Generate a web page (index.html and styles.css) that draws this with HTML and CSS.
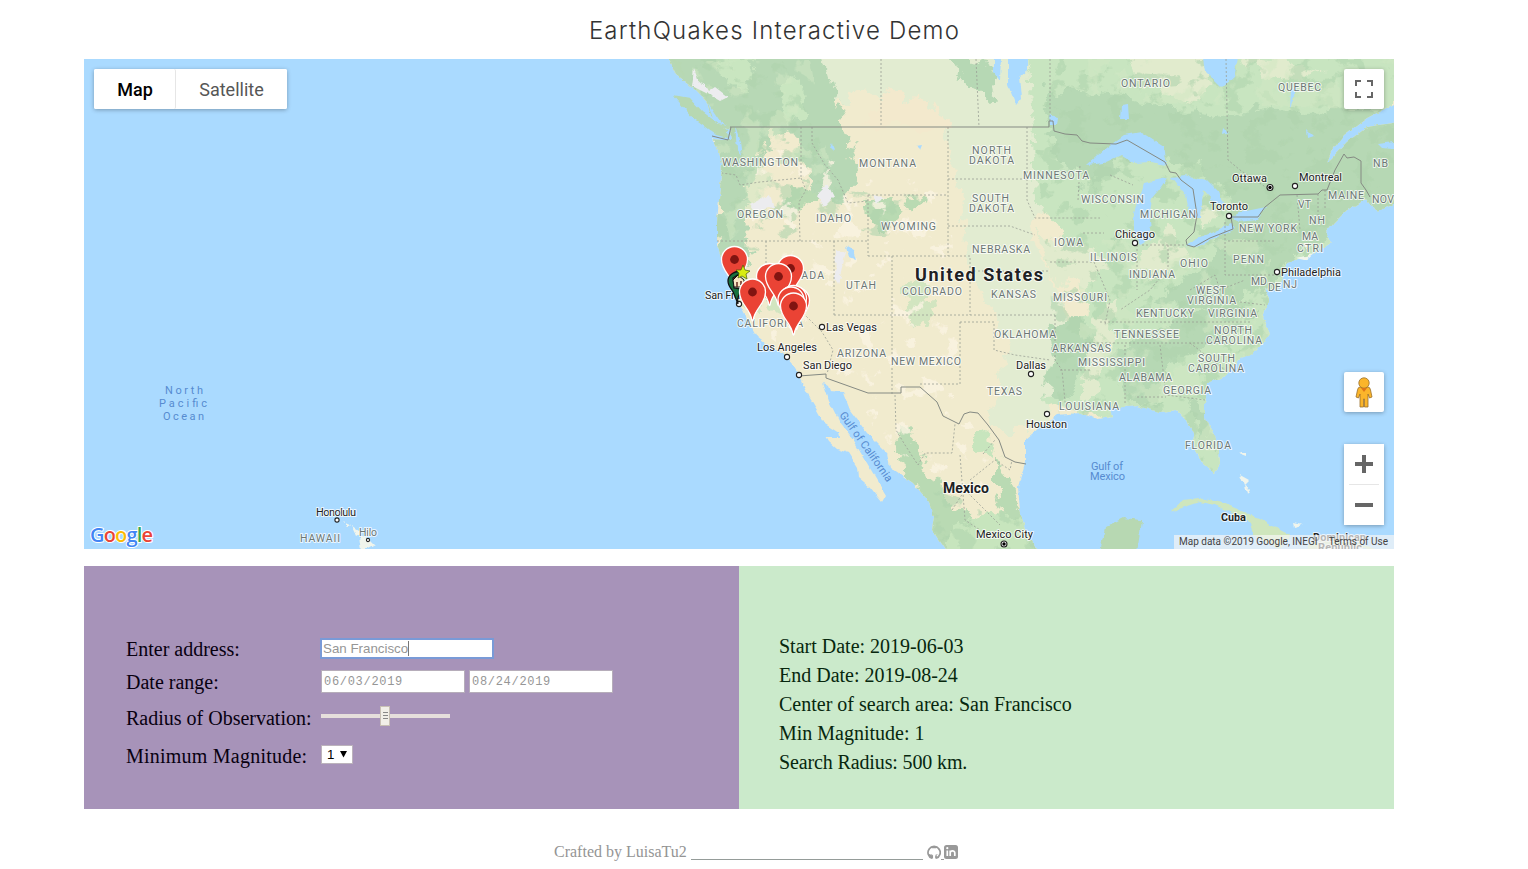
FILE: index.html
```html
<!DOCTYPE html>
<html lang="en">
<head>
<meta charset="utf-8">
<title>EarthQuakes Interactive Demo</title>
<link rel="stylesheet" href="styles.css">
</head>
<body>
<h1 class="title">EarthQuakes Interactive Demo</h1>
<main class="content">
<section class="map">
<svg class="map-canvas" viewBox="84 59 1310 490" width="1310" height="490">
<defs>
<filter id="rough" x="0" y="0" width="100%" height="100%"><feTurbulence type="fractalNoise" baseFrequency=".11" numOctaves="3" seed="4"/><feDisplacementMap in="SourceGraphic" scale="5" xChannelSelector="R" yChannelSelector="G"/></filter>
<filter id="ragged" x="-10%" y="-10%" width="120%" height="120%" color-interpolation-filters="sRGB"><feTurbulence type="fractalNoise" baseFrequency=".06" numOctaves="4" seed="9"/><feDisplacementMap in="SourceGraphic" scale="24" xChannelSelector="R" yChannelSelector="G"/></filter>
<filter id="patchDark" x="0" y="0" width="100%" height="100%" color-interpolation-filters="sRGB"><feTurbulence type="fractalNoise" baseFrequency=".045 .055" numOctaves="4" seed="12"/><feColorMatrix values="0 0 0 0 .69  0 0 0 0 .83  0 0 0 0 .68  14 0 0 0 -7.8"/><feComposite operator="in" in2="SourceGraphic"/></filter>
<filter id="patchLight" x="0" y="0" width="100%" height="100%" color-interpolation-filters="sRGB"><feTurbulence type="fractalNoise" baseFrequency=".05" numOctaves="4" seed="31"/><feColorMatrix values="0 0 0 0 .985  0 0 0 0 .955  0 0 0 0 .89  0 16 0 0 -10.1"/><feComposite operator="in" in2="SourceGraphic"/></filter>
<filter id="patchPale" x="0" y="0" width="100%" height="100%" color-interpolation-filters="sRGB"><feTurbulence type="fractalNoise" baseFrequency=".035" numOctaves="4" seed="44"/><feColorMatrix values="0 0 0 0 .82  0 0 0 0 .91  0 0 0 0 .77  0 0 14 0 -7.9"/><feComposite operator="in" in2="SourceGraphic"/></filter>
<clipPath id="land"><path d="M667 55L677 75 690 85 707 102 711 116 722 127 730 130 731 140 722 140 713 139 719 152 722 165 720 188 717 222 717 245 723 262 730 280 736 294 740 304 748 320 757 337 770 347 783 353 792 364 799 377 807 393 817 410 825 424 839 433 840 437 826 437 829 442 837 449 848 453 857 467 858 477 870 487 882 502 886 495 877 480 867 463 853 440 840 423 830 403 823 383 828 386 830 391 843 392 850 410 867 433 887 453 890 467 913 483 930 503 934 517 932 530 947 552 1038 552 1025 530 1020 510 1018 487 1025 463 1025 440 1040 427 1057 415 1080 413 1097 419 1113 417 1110 408 1137 406 1160 412 1177 410 1187 420 1193 433 1195 450 1203 463 1215 473 1220 463 1218 443 1205 417 1205 403 1208 383 1227 375 1240 360 1257 350 1270 333 1263 318 1268 300 1264 288 1277 290 1282 280 1287 263 1311 255 1331 243 1326 232 1334 222 1344 212 1367 198 1377 212 1398 202 1398 122 1367 127 1347 142 1327 163 1331 152 1344 135 1367 118 1398 102V55Z"/></clipPath>
</defs>
<rect x="84" y="59" width="1310" height="490" fill="#aadaff"/>
<g filter="url(#rough)">
<g clip-path="url(#land)">
<rect x="650" y="50" width="750" height="510" fill="#f1ebce"/>
<g filter="url(#ragged)">
<path fill="#e2ecd1" d="M820 40H1080V150L1030 230 1070 330 1045 430H990L1010 340 970 270 960 190 945 125H900L870 90 825 110Z"/>
<path fill="#f3e9cd" d="M865 127L885 90 925 100 955 127Z"/>
<path fill="#b7d8b5" d="M650 40H820L835 90 850 150 858 180 835 205 815 195 800 150 790 132 772 135 760 165 748 190 745 240 752 262 738 275 715 250 712 125 650 80Z"/>
<path fill="#c9e6c0" d="M700 40H755L745 95 725 80ZM780 90L800 75 805 120 790 127Z"/>
<path fill="#b9dab2" d="M863 200L890 198 905 210 880 235 868 225ZM905 195L925 203 910 210ZM808 185L830 195 805 207 770 220 785 200Z"/>
<path fill="#c8e5c0" d="M1030 50H1400V330L1210 480 1180 430 1060 410 1045 400 1060 330 1090 310 1080 260 1035 200Z"/>
<path fill="#b6d8b4" d="M1045 88L1120 95 1180 112 1225 118 1260 105 1300 112 1400 110V220L1300 250 1270 290 1190 310 1150 300 1210 265 1230 200 1200 165 1120 160 1090 190 1050 150Z"/>
<path fill="#b6d8b4" d="M1045 325L1080 318 1100 335 1085 365 1065 400 1045 395 1055 360ZM1115 350L1210 305 1265 310 1220 340 1165 370 1160 405 1125 402ZM1190 400L1207 410 1217 455 1195 430ZM950 55L985 60 995 100 965 85Z"/>
<path fill="#e1ebcd" d="M1130 50H1205L1210 90 1190 108 1165 90 1135 80ZM1240 55L1290 62 1320 75 1270 82ZM1100 310L1118 300 1110 350 1092 405 1078 402ZM1130 265L1170 225 1190 255 1160 280ZM1185 205L1225 208 1205 230ZM1040 235L1080 245 1110 265 1085 285 1050 280Z"/>
<path fill="#b9dab3" d="M900 425L915 435 925 465 950 505 985 520 1035 530 1040 560H930L925 500 895 455ZM995 455L1010 480 1025 530 1010 530 995 490Z"/>
<path fill="#c7e5bd" d="M950 530L990 510 1020 520 1040 560H945ZM975 425L995 440 990 460 970 445Z"/>
<path fill="#d2e5c0" d="M725 270L745 275 760 310 745 310ZM768 285L785 300 780 315 765 300ZM905 290L925 265 935 310 910 330Z"/>
</g>
<path filter="url(#patchDark)" opacity=".6" d="M690 55H780L850 205 760 250 705 245ZM1035 130L1060 59H1394V320L1210 480 1060 415ZM930 490L1035 520V550H935ZM820 190L920 195 900 240 840 230Z"/>
<path filter="url(#patchPale)" opacity=".55" d="M1060 59H1394V110L1060 100ZM690 60H810L830 170 730 240ZM1080 240H1270V450H1080Z"/>
<path filter="url(#patchLight)" opacity=".8" d="M760 140L950 190 960 400 1010 500 930 490 840 390 760 330 750 240Z"/>
</g>
<g fill="#ececef"><path d="M694 69L699 82 705 84 709 91 715 87 728 97 720 101 708 94 692 86ZM817 195L828 184 834 196 823 207ZM836 250L846 252 838 285 835 278ZM750 205L770 195 774 207 755 211ZM872 195L883 197 878 204Z"/></g>
<g fill="#aadaff"><path d="M735 126L740 142 742 156 737 149ZM846 246L853 250 856 260 849 257ZM994 57H1001L1000 80 994 72ZM1008 57H1028V70L1020 77 1022 98 1016 105 1008 85ZM1204 57H1238L1234 77 1222 88 1206 72ZM1121 105L1128 104 1129 119 1120 119ZM1291 90L1298 86 1290 108ZM708 103L720 121 727 125 714 122ZM916 146L922 145 920 150ZM832 143L834 152 830 148ZM1223 128L1228 133 1222 135ZM1307 129L1314 136 1308 138ZM1050 115L1058 117 1057 125 1051 125Z"/>
<path d="M1087 165L1107 147 1124 135 1141 132 1164 147 1167 165 1151 162 1134 163 1121 155 1104 163ZM1144 183L1167 178 1161 187 1152 198 1149 222 1151 240 1141 245 1134 232 1134 212ZM1171 177L1184 175 1207 180 1219 192 1224 207 1211 199 1203 190 1201 218 1191 218 1186 196ZM1186 245L1194 240 1211 233 1232 223 1234 229 1217 238 1194 248ZM1231 217L1241 212 1266 207 1257 219 1237 221ZM1378 144L1394 142V149L1382 148Z"/></g>
<path fill="#b7d8b2" d="M673 95L690 98 703 112 727 130 728 138 716 135 693 118ZM671 58L681 62 684 77ZM1100 552L1105 527 1123 518 1142 520 1137 552Z"/>
<path fill="#cfe6bd" d="M1170 512L1183 500 1200 498 1223 503 1247 513 1270 525 1290 535 1280 549 1253 535 1250 522 1215 505 1200 502ZM1308 545L1330 538 1380 549H1308Z"/>
<path fill="#f1f5ec" d="M343 521L352 525 348 526ZM352 526L361 532 356 535ZM360 535L368 538 375 545 362 552ZM1238 453H1246V456ZM1240 475L1249 480 1244 485ZM1245 484L1250 490 1247 495ZM1290 505L1293 508ZM1293 523L1302 525 1294 527ZM1303 244H1311L1306 248ZM1297 258L1313 254 1305 260Z"/>
</g>
<g class="state-lines">
<path d="M801 127V178L760 182 740 185 736 175 722 173M801 178L806 190 799 202 800 241M717 241H868M812 127V143L825 165 838 180 848 203 868 201M868 195H948M948 127V256M868 195V256M868 256H970V315M834 241V315M892 256V395M766 241V276L822 332 833 350 827 374M834 315H1055M960 322V384H919M960 322H994V350L1015 355 1050 360M948 179H1027M948 226H1010L1035 235M1027 127V200L1035 218H1100M970 271H1050M1055 315V360L1062 370 1066 412M1050 262H1094L1110 300 1105 325M1100 322H1250M1085 343H1215M1137 245V290M1168 245V268L1150 290 1120 310M1142 245H1185M1225 222V275H1278M1228 241H1275M1125 345V404M1160 345L1166 395 1205 400M1137 397H1166M1060 370H1090M1190 290L1215 275 1220 290 1245 280M1050 59V121M881 59V127M976 59L979 127M1226 59L1228 160 1240 170 1270 190M1078 200L1080 165M1110 175L1133 185M1083 233H1104M1297 195L1300 230M1318 194V222M1325 190V210M1240 302L1265 305M1190 343L1225 370M895 395L896 430 905 445 918 465 925 453H952L955 424M970 480L995 460 1010 470 1012 460M952 510L965 490 985 510 1000 525M983 454L995 440M960 455L965 520 980 530"/>
</g>
<g class="country-lines"><path d="M730 127H1049V121H1053L1054 131 1065 134 1077 135 1082 141 1090 143 1116 144 1127 140 1165 162 1170 172 1176 173 1181 180 1193 189 1197 215 1194 232 1186 240 1187 245 1194 247 1210 238 1233 229 1231 217H1258L1265 207 1280 195 1318 194 1322 190H1327L1335 170 1344 154 1347 158 1354 157 1361 161V183L1366 190 1370 197M712 136L728 140 731 127M799 376L826 374V378L868 393H901V387H920L937 402 943 416 959 424 964 414 970 412 978 413 988 425 999 440 1005 457 1015 462 1026 464"/></g>
<g class="state-label">
<text x="722" y="166" textLength="76">WASHINGTON</text><text x="859" y="167" textLength="57">MONTANA</text><text x="972" y="154" textLength="39">NORTH</text><text x="969" y="164" textLength="45">DAKOTA</text><text x="1023" y="179" textLength="66">MINNESOTA</text><text x="737" y="218" textLength="46">OREGON</text><text x="816" y="222" textLength="35">IDAHO</text><text x="881" y="230" textLength="55">WYOMING</text><text x="972" y="202" textLength="37">SOUTH</text><text x="969" y="212" textLength="45">DAKOTA</text><text x="1081" y="203" textLength="63">WISCONSIN</text><text x="1140" y="218" textLength="56">MICHIGAN</text><text x="972" y="253" textLength="58">NEBRASKA</text><text x="1054" y="246" textLength="29">IOWA</text><text x="1090" y="261" textLength="47">ILLINOIS</text><text x="1129" y="278" textLength="46">INDIANA</text><text x="1180" y="267" textLength="28">OHIO</text><text x="1233" y="263" textLength="31">PENN</text><text x="1239" y="232" textLength="58">NEW YORK</text><text x="846" y="289" textLength="30">UTAH</text><text x="902" y="295" textLength="60">COLORADO</text><text x="991" y="298" textLength="45">KANSAS</text><text x="1053" y="301" textLength="54">MISSOURI</text><text x="1196" y="294" textLength="30">WEST</text><text x="1187" y="304" textLength="49">VIRGINIA</text><text x="1136" y="317" textLength="58">KENTUCKY</text><text x="1208" y="317" textLength="49">VIRGINIA</text><text x="1114" y="338" textLength="65">TENNESSEE</text><text x="1214" y="334" textLength="38">NORTH</text><text x="1206" y="344" textLength="56">CAROLINA</text><text x="1198" y="362" textLength="37">SOUTH</text><text x="1188" y="372" textLength="56">CAROLINA</text><text x="994" y="338" textLength="62">OKLAHOMA</text><text x="1052" y="352" textLength="59">ARKANSAS</text><text x="1078" y="366" textLength="67">MISSISSIPPI</text><text x="1119" y="381" textLength="53">ALABAMA</text><text x="1163" y="394" textLength="48">GEORGIA</text><text x="1059" y="410" textLength="60">LOUISIANA</text><text x="987" y="395" textLength="35">TEXAS</text><text x="1185" y="449" textLength="46">FLORIDA</text><text x="837" y="357" textLength="49">ARIZONA</text><text x="891" y="365" textLength="70">NEW MEXICO</text><text x="737" y="327" textLength="66">CALIFORNIA</text><text x="778" y="279" textLength="46">NEVADA</text><text x="1121" y="87" textLength="49">ONTARIO</text><text x="1278" y="91" textLength="43">QUEBEC</text><text x="1373" y="167" textLength="15">NB</text><text x="1328" y="199" textLength="36">MAINE</text><text x="1372" y="203" textLength="22">NOV</text><text x="1298" y="208" textLength="13">VT</text><text x="1309" y="224" textLength="16">NH</text><text x="1302" y="240" textLength="16">MA</text><text x="1297" y="252" textLength="26">CTRI</text><text x="1251" y="285" textLength="16">MD</text><text x="1268" y="291" textLength="13">DE</text><text x="1283" y="288" textLength="14">NJ</text><text x="300" y="542" textLength="40">HAWAII</text><text x="359" y="536" textLength="18">Hilo</text>
</g>
<g class="city-label">
<text x="1232" y="182" textLength="35">Ottawa</text><text x="1299" y="181" textLength="43">Montreal</text><text x="1210" y="210" textLength="38">Toronto</text><text x="1115" y="238" textLength="40">Chicago</text><text x="1281" y="276" textLength="60">Philadelphia</text><text x="705" y="299" textLength="66">San Francisco</text><text x="826" y="331" textLength="51">Las Vegas</text><text x="757" y="351" textLength="60">Los Angeles</text><text x="803" y="369" textLength="49">San Diego</text><text x="1016" y="369" textLength="30">Dallas</text><text x="1026" y="428" textLength="41">Houston</text><text x="976" y="538" textLength="57">Mexico City</text><text x="316" y="516" textLength="40">Honolulu</text>
<text class="bold" x="1221" y="521" textLength="25">Cuba</text><text class="bold" x="1313" y="541" textLength="53">Dominican</text><text class="bold" x="1318" y="551" textLength="44">Republic</text>
</g>
<text class="country mexico" x="943" y="493" textLength="46">Mexico</text>
<text class="country usa" x="915" y="281" textLength="128">United States</text>
<g class="water-label"><text x="165" y="394" textLength="38">North</text><text x="159" y="407" textLength="48">Pacific</text><text x="163" y="420" textLength="41">Ocean</text><text x="1091" y="470" textLength="32">Gulf of</text><text x="1090" y="480" textLength="35">Mexico</text><text transform="translate(839 415) rotate(54.5)" textLength="83">Gulf of California</text></g>
<g class="city-dot"><circle cx="1295" cy="186" r="2.6"/><circle cx="1229" cy="216" r="2.6"/><circle cx="1135" cy="243" r="2.6"/><circle cx="1277" cy="272" r="2.6"/><circle cx="739" cy="304" r="2.6"/><circle cx="822" cy="327" r="2.6"/><circle cx="787" cy="357" r="2.6"/><circle cx="799" cy="375" r="2.6"/><circle cx="1031" cy="374" r="2.6"/><circle cx="1047" cy="414" r="2.6"/><circle cx="337" cy="520" r="2.1"/><circle cx="368" cy="540" r="1.6"/><circle cx="1270" cy="187.500" r="3"/><circle cx="1004" cy="544" r="3"/></g>
<circle cx="1270" cy="187.500" r="1.700"/><circle cx="1004" cy="544" r="1.700"/>
<defs><g id="pin"><path d="M-.7 28C-2 17-13 12-13 0A13 13 0 0 1 13 0C13 12 2 17 .7 28Q0 30-.7 28Z" fill="#ea4335" stroke="#fff" stroke-width="1.300"/><circle r="4.400" fill="#811411"/></g></defs>
<use href="#pin" x="734.500" y="259.500"/>
<use href="#pin" x="790.500" y="268.500"/>
<use href="#pin" x="769.500" y="276.500"/>
<use href="#pin" x="778.500" y="276.500"/>
<use href="#pin" x="796.500" y="300.500"/>
<use href="#pin" x="793.500" y="298.500"/>
<use href="#pin" x="791" y="300"/>
<g><path d="M742 272C735 270 728 275 728 281C728 287 733 290 734 294L738 304C736 295 741 294 742 289L734 288 733 278Z" fill="#19723e" stroke="#111" stroke-width="1.300"/><path d="M733 280L738 275 744 280V287H734Z" fill="#fae7c4" stroke="#111"/><path d="M737 282V287M741 281V285" stroke="#652b20" stroke-width="1.500"/><path d="M743 265L745 270 750 271 746 274 747 279 742 276 738 278 739 273 736 270 741 270Z" fill="#d8ed13" stroke="#465d09" stroke-width=".7"/></g>
<use href="#pin" x="752.500" y="292"/>
<use href="#pin" x="793.500" y="306"/>
<text class="google" x="90" y="542" textLength="63"><tspan fill="#4285f4">G</tspan><tspan fill="#ea4335">o</tspan><tspan fill="#fbbc05">o</tspan><tspan fill="#4285f4">g</tspan><tspan fill="#34a853">l</tspan><tspan fill="#ea4335">e</tspan></text>
</svg>
<div class="map-types"><button class="type active">Map</button><button class="type">Satellite</button></div>
<button class="control fullscreen" aria-label="Fullscreen"><svg width="18" height="18" viewBox="0 0 18 18"><path d="M1 6V1H6M12 1h5V6M17 12v5H12M6 17H1V12" fill="none" stroke="#666" stroke-width="2"/></svg></button>
<button class="control pegman" aria-label="Street View"><svg width="18" height="31" viewBox="0 0 18 31"><g fill="#fbb52a" stroke="#9b702c" stroke-width=".8"><path d="M5 10H13Q15 10 15.500 13L17 20 14.500 21 13 17V30H9.500V22H8.500V30H5V17L3.500 21 1 20 2.500 13Q3 10 5 10Z"/><circle cx="9" cy="6" r="5.200"/></g><path d="M6 11H12L9 15Z" fill="#de7518"/></svg></button>
<div class="zoom"><button aria-label="Zoom in"><svg width="18" height="18"><path d="M0 9H18M9 0V18" stroke="#666" stroke-width="4"/></svg></button><i></i><button aria-label="Zoom out"><svg width="18" height="18"><path d="M0 9H18" stroke="#666" stroke-width="4"/></svg></button></div>
<div class="attribution"><span>Map data ©2019 Google, INEGI</span><span>Terms of Use</span></div>
</section>
<section class="panels">
<form class="settings">
<label class="row address"><span class="caption c1">Enter address:</span><span class="field focus">San Francisco<i class="caret"></i></span></label>
<div class="row dates"><span class="caption c2">Date range:</span><span class="field date">06/03/2019</span><span class="field date">08/24/2019</span></div>
<div class="row radius"><span class="caption c3">Radius of Observation:</span><span class="slider"><span class="thumb"><i></i><i></i><i></i></span></span></div>
<div class="row magnitude"><span class="caption c4">Minimum Magnitude:</span><span class="select"><span>1</span><svg width="7" height="7"><path d="M0 0H7L3.500 6.500Z"/></svg></span></div>
</form>
<div class="summary">
<p>Start Date: 2019-06-03</p><p>End Date: 2019-08-24</p><p>Center of search area: San Francisco</p><p>Min Magnitude: 1</p><p class="s5">Search Radius: 500 km.</p>
</div>
</section>
</main>
<footer class="footer"><span class="credit">Crafted by LuisaTu2</span><span class="rule"></span>
<svg class="github" width="14" height="15" viewBox="0 0 14 15"><path d="M5.200 13.600V11C3.300 11.300 2.800 10.200 2 9.800M9 13.600V10.500M5.200 13.300A6.100 6.100 0 1 1 9 13.300" fill="none" stroke="#999" stroke-width="1.700"/><path d="M2.900 2.600L5 3.300H9L11.100 2.600V5.500L12 4 10 2H4L2 4 2.900 5.500ZM3 9L5.500 9.700 5 11ZM11 9L8.500 9.700 9 11Z" fill="#999"/></svg><span class="gap"></span>
<svg width="14" height="14" viewBox="0 0 14 14"><rect width="14" height="14" rx="2.500" fill="#999"/><path d="M3.300 5.500V11M6.200 11V5.500M6.200 8C6.200 5.200 10.800 5 10.800 8V11" fill="none" stroke="#fff" stroke-width="1.700"/><circle cx="3.300" cy="3.200" r="1.100" fill="#fff"/></svg>
</footer>
</body>
</html>
```
FILE: styles.css
```css
* { box-sizing: border-box; }
body { margin: 0; height: 869px; overflow: hidden; background: #fff; }
.title { margin: 0; height: 59px; padding: 1px 0 0 21px; text-align: center; font: 300 24px/59px Inter, "Open Sans", sans-serif; letter-spacing: 1.2px; color: #333; }
.content { width: 1310px; margin-left: 84px; }
.map { position: relative; height: 490px; overflow: hidden; }
.map-canvas { display: block; font-family: Roboto, sans-serif; }
.state-lines path { fill: none; stroke: #9b9f96; stroke-width: .8; stroke-dasharray: 2 2; }
.country-lines path { fill: none; stroke: #858a83; stroke-width: 1; }
.state-label, .city-label, .country, .google { paint-order: stroke; stroke: rgba(255,255,255,.75); stroke-width: 2px; stroke-linejoin: round; }
.state-label { font-size: 10.500px; fill: #6c7775; }
.city-label { font-size: 11px; fill: #222; }
.city-label .bold { font-weight: 700; }
.country { fill: #202124; font-weight: 700; }
.mexico { font-size: 14px; }
.usa { font-size: 18px; }
.water-label { font-size: 11px; fill: #568bd0; }
.city-dot { fill: #fff; stroke: #222; stroke-width: 1.100; }
.google { font: 600 20px "Open Sans", sans-serif; stroke: #fff; }
button { padding: 0; border: 0; background: #fff; }
.map-types, .control, .zoom { position: absolute; background: #fff; border-radius: 2px; box-shadow: 0 1px 4px rgba(0,0,0,.3); }
.map-types { left: 10px; top: 10px; display: flex; width: 193px; height: 40px; }
.type { flex: 1; border-radius: 2px; font: 400 18px Roboto, sans-serif; color: #565656; }
.type.active { flex: 0 0 82px; padding-left: 1px; border-right: 1px solid #e6e6e6; color: #000; font-weight: 500; }
.control { display: grid; place-items: center; right: 10px; width: 40px; height: 40px; }
.fullscreen { top: 10px; }
.pegman { top: 313px; }
.zoom { display: grid; grid-template-rows: 40px 1px 40px; right: 10px; top: 385px; width: 40px; height: 81px; }
.zoom button { display: grid; place-items: center; }
.zoom i { margin: 0 5px; background: #e6e6e6; }
.attribution { position: absolute; right: 0; bottom: 0; display: flex; justify-content: space-between; width: 220px; height: 14px; padding: 0 6px 0 5px; background: rgba(245,245,245,.7); font: 10px/14px Roboto, sans-serif; color: #444; white-space: nowrap; }
.panels { display: grid; grid-template-columns: 655px 655px; height: 243px; margin-top: 17px; font-family: "Liberation Serif", serif; font-size: 20px; }
.settings { padding: 65px 0 0 42px; background: #a793b9; color: #080010; }
.row { display: flex; align-items: center; }
.address { height: 35px; }
.dates { height: 31px; }
.radius { height: 41px; }
.magnitude { height: 36px; }
.caption { flex: 0 0 195px; white-space: nowrap; line-height: 24px; }
.c2 { padding-top: 1px; }
.c4 { letter-spacing: .23px; }
.field { display: flex; align-items: center; height: 23px; padding-left: 3px; background: #fff; border: 1px solid #b6adba; color: #969696; }
.focus { width: 174px; height: 21px; margin-left: -1px; padding-left: 1px; border: 2px solid #799ad7; font: 13.330px "Liberation Sans", sans-serif; }
.address .field { margin-top: -1px; }
.caret { width: 1px; height: 15px; background: #777; }
.date { width: 144px; margin-right: 4px; padding-left: 2px; font: 12px "Liberation Mono", monospace; letter-spacing: .7px; }
.slider { display: flex; align-items: center; width: 129px; height: 4px; margin-top: -4px; padding-left: 59px; background: #e6dfdc; }
.thumb { display: flex; flex-direction: column; align-items: center; justify-content: center; gap: 2px; width: 10px; height: 20px; background: #f1efe8; border: 1px solid #c8c0b5; }
.thumb i { width: 5px; height: 1px; background: #888; }
.select { display: flex; align-items: center; gap: 6px; width: 32px; height: 19px; margin-top: -3px; padding-left: 5px; background: #fff; border: 1px solid #bcb3bc; font: 13.300px "Liberation Sans", sans-serif; color: #000; }
.summary { padding: 66px 40px 0; background: #cbeacb; color: #07270e; }
.summary p { margin: 0; line-height: 29px; white-space: nowrap; }
.summary .s5 { letter-spacing: -.13px; }
.footer { display: flex; align-items: center; height: 26px; margin: 30px 0 0 554px; font: 16px "Liberation Serif", serif; color: #949494; }
.credit { width: 136px; white-space: nowrap; }
.rule { width: 232px; height: 1px; margin: 14px 4px 0 1px; background: #959c99; }
.gap { width: 3px; height: 1px; margin-top: 14px; background: #999; }
```
